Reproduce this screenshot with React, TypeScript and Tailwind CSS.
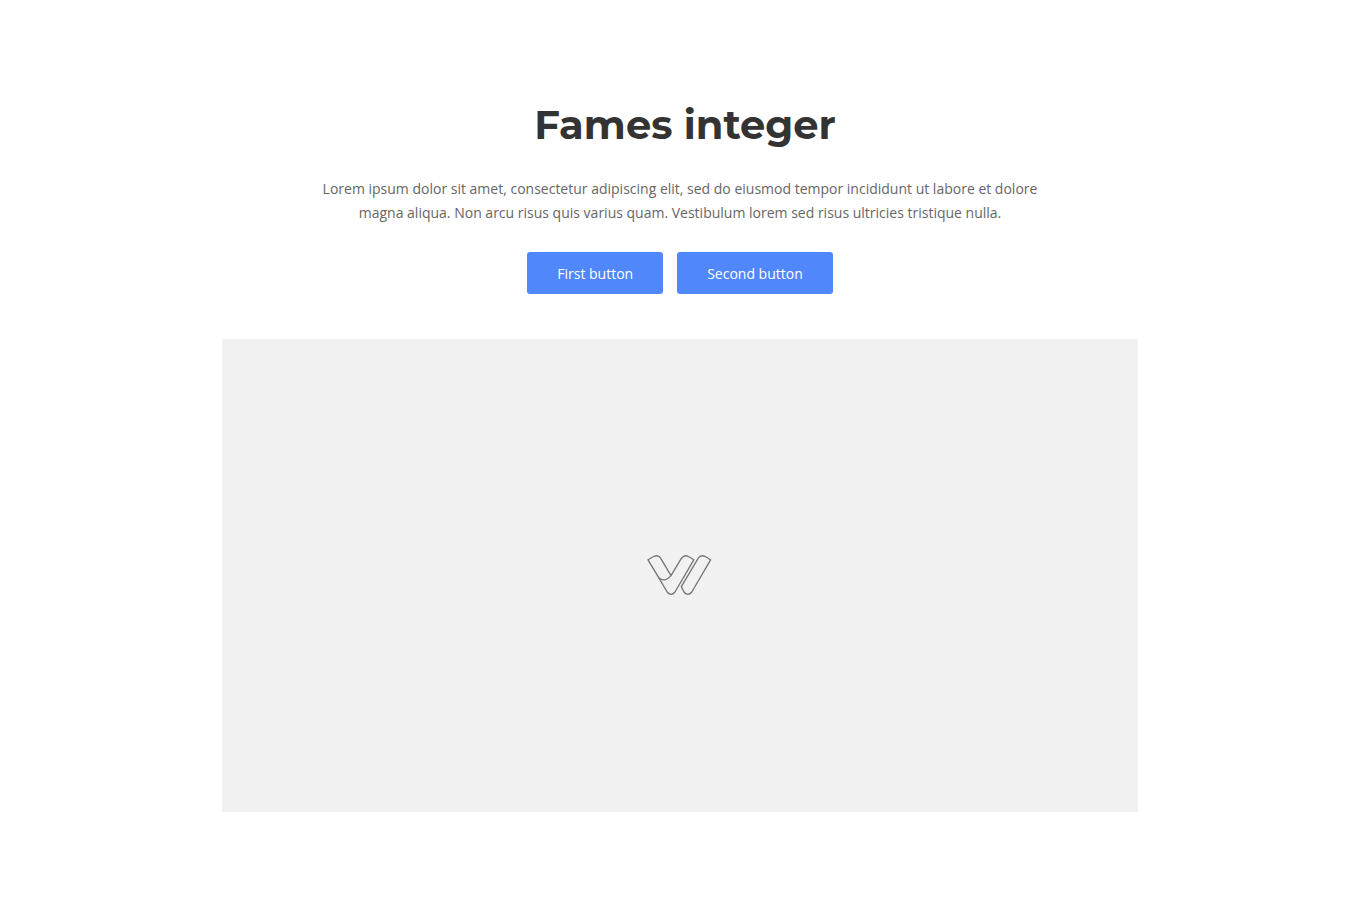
import React from "react";

const buttons = ["First button", "Second button"];

const PlaceholderLogo: React.FC = () => (
  <svg
    width="66"
    height="43"
    viewBox="0 0 66 43"
    fill="none"
    stroke="#757575"
    strokeWidth="1.3"
    strokeLinejoin="round"
    aria-hidden="true"
  >
    {/* left stem */}
    <path d="M1 5.8 L6.6 2.5 Q11 0.3 13.6 4.2 L24 21.7 Q18 29 11.7 23.7 Z" />
    {/* check */}
    <path d="M11.7 23.7 L20.2 38 Q24 42.6 28 38 L46.8 5.8 L41.5 2.5 Q37.2 0.3 34.5 4.2 L24 21.7" />
    {/* right stem */}
    <path d="M34.3 32.6 L51.3 4.2 Q54 0.3 58.3 2.5 L63.6 5.8 L44.8 38 Q40.8 42.6 37 38 Z" />
  </svg>
);

export default function App() {
  return (
    <main className="min-h-screen bg-white px-6 py-24 font-['Open_Sans',sans-serif] text-sm text-[#666666]">
      <section className="mx-auto flex max-w-[916px] flex-col items-center">
        <h1 className="pl-2.5 text-center font-['Montserrat','Inter',sans-serif] text-[40px] leading-[58px] font-bold text-[#333333]">
          Fames integer
        </h1>
        <p className="mt-[23px] max-w-[740px] text-center leading-6">
          Lorem ipsum dolor sit amet, consectetur adipiscing elit, sed do
          eiusmod tempor incididunt ut labore et dolore magna aliqua. Non arcu
          risus quis varius quam. Vestibulum lorem sed risus ultricies tristique
          nulla.
        </p>
        <div className="mt-[27px] flex flex-wrap justify-center gap-3.5">
          {buttons.map((label) => (
            <button
              key={label}
              type="button"
              className="h-[42px] cursor-pointer rounded-[3px] bg-[#5087fb] px-[30px] pt-0.5 text-white hover:bg-[#3d76ef]"
            >
              {label}
            </button>
          ))}
        </div>
        <div className="mt-[45px] flex aspect-[916/473] w-full items-center justify-center bg-[#f1f1f1]">
          <PlaceholderLogo />
        </div>
      </section>
    </main>
  );
}
